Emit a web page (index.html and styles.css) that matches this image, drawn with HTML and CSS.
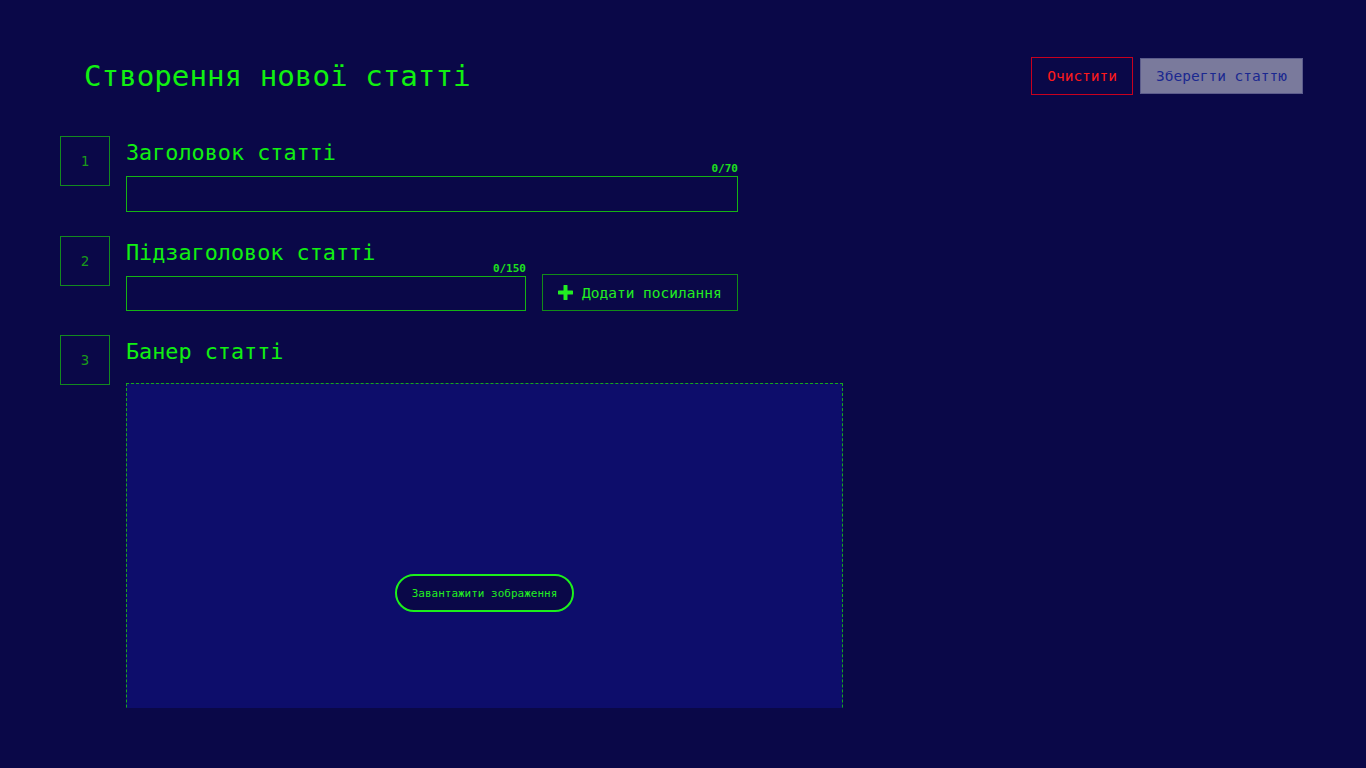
FILE: index.html
```html
<!DOCTYPE html>
<html lang="uk">
<head>
<meta charset="utf-8">
<title>Створення нової статті</title>
<link rel="stylesheet" href="styles.css">
</head>
<body>
<div class="page">
  <header class="header">
    <h1 class="title">Створення нової статті</h1>
    <div class="actions">
      <button class="btn btn-clear">Очистити</button>
      <button class="btn btn-save">Зберегти статтю</button>
    </div>
  </header>
  <main class="steps">
    <section class="step">
      <div class="step-num">1</div>
      <div class="step-body">
        <div class="label">Заголовок статті</div>
        <div class="field field-wide">
          <span class="counter">0/70</span>
          <input class="input input-tall" type="text">
        </div>
      </div>
    </section>
    <section class="step">
      <div class="step-num">2</div>
      <div class="step-body">
        <div class="label label-sub">Підзаголовок статті</div>
        <div class="field-row">
          <div class="field field-sub">
            <span class="counter">0/150</span>
            <input class="input" type="text">
          </div>
          <button class="btn-link">
            <svg class="plus" width="15" height="15" viewBox="0 0 15 15"><path d="M7.5 1v13M1 7.5h13" stroke="#22ee22" stroke-width="4" stroke-linecap="round"/></svg>
            <span>Додати посилання</span>
          </button>
        </div>
      </div>
    </section>
    <section class="step">
      <div class="step-num">3</div>
      <div class="step-body">
        <div class="label label-banner">Банер статті</div>
        <div class="dropzone">
          <button class="btn-upload">Завантажити зображення</button>
        </div>
      </div>
    </section>
  </main>
</div>
</body>
</html>
```
FILE: styles.css
```css
html, body {
  margin: 0;
  padding: 0;
  background: #0a0848;
  font-family: "DejaVu Sans Mono", "Liberation Mono", monospace;
}
.page {
  height: 708px;
  overflow: hidden;
}
.header {
  display: flex;
  justify-content: space-between;
  align-items: center;
  padding: 57px 63px 0 84px;
  height: 38px;
}
.title {
  margin: 0;
  font-size: 29.2px;
  font-weight: normal;
  color: #11f011;
  line-height: 38px;
}
.actions {
  display: flex;
  align-items: center;
  gap: 7px;
}
.btn {
  font-family: inherit;
  font-size: 14.5px;
  padding: 0 15px;
  cursor: pointer;
}
.btn-clear {
  height: 38px;
  background: transparent;
  border: 1px solid #c8001e;
  color: #ff1a1a;
}
.btn-save {
  height: 36px;
  background: #7a7a9c;
  border: 1px solid #5c5c8c;
  color: #1a2890;
}
.steps {
  padding: 41px 0 0 60px;
  display: flex;
  flex-direction: column;
  gap: 24px;
}
.step {
  display: flex;
  gap: 16px;
  align-items: flex-start;
}
.step-num {
  width: 48px;
  height: 48px;
  border: 1px solid #138a1f;
  color: #1a9a1a;
  font-size: 14px;
  display: flex;
  align-items: center;
  justify-content: center;
  flex: none;
}
.step-body {
  display: flex;
  flex-direction: column;
}
.label {
  font-size: 21.8px;
  color: #11f011;
  line-height: 34px;
  height: 40px;
}
.label-sub {
  height: 38px;
}
.label-banner {
  height: 48px;
}
.field {
  position: relative;
}
.field-wide {
  width: 612px;
}
.field-sub {
  width: 400px;
}
.counter {
  position: absolute;
  right: 0;
  top: -14px;
  font-size: 11px;
  font-weight: bold;
  color: #1ee01e;
  line-height: 13px;
}
.input {
  display: block;
  box-sizing: border-box;
  width: 100%;
  height: 35px;
  margin: 0;
  background: transparent;
  border: 1px solid #14b414;
  outline: none;
  color: #11f011;
  font-family: inherit;
}
.input-tall {
  height: 36px;
}
.field-row {
  display: flex;
  align-items: flex-end;
  gap: 16px;
}
.btn-link {
  box-sizing: border-box;
  width: 196px;
  height: 37px;
  display: flex;
  align-items: center;
  gap: 9px;
  padding: 0 0 0 15px;
  background: transparent;
  border: 1px solid #128c18;
  color: #22ee22;
  font-family: inherit;
  font-size: 14.5px;
  cursor: pointer;
}
.plus {
  flex: none;
}
.dropzone {
  box-sizing: border-box;
  width: 717px;
  height: 420px;
  background: #0d0d6b;
  border: 1px dashed #17a81c;
  display: flex;
  align-items: center;
  justify-content: center;
}
.btn-upload {
  box-sizing: border-box;
  width: 179px;
  height: 38px;
  border-radius: 19px;
  border: 2px solid #1cf01c;
  background: #0a0848;
  color: #22ee22;
  font-family: inherit;
  font-size: 11px;
  padding: 0;
  cursor: pointer;
}
```
